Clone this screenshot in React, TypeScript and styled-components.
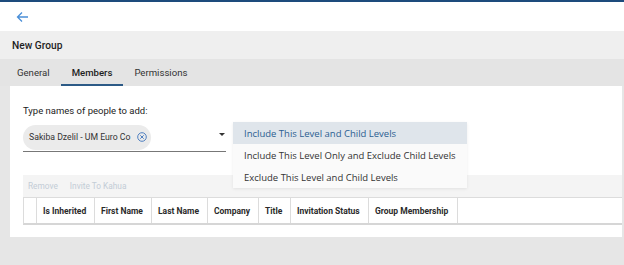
import styled, { createGlobalStyle } from "styled-components";

const Global = createGlobalStyle`
  html, body {
    margin: 0;
    padding: 0;
    background: #e6e6e6;
    font-family: Roboto, "Liberation Sans", Arial, sans-serif;
    color: #222;
  }
  * { box-sizing: border-box; }
`

const Page = styled.div`
  width: 624px;
  height: 265px;
  overflow: hidden;
  background: #e6e6e6;
  border-top: 2px solid #1d4b7c;
`

const TopBar = styled.div`
  height: 29px;
  background: #fff;
  display: flex;
  align-items: center;
  padding-left: 16px;
  color: #4a8fd8;
`

const TitleBar = styled.div`
  height: 28px;
  background: #efefef;
  display: flex;
  align-items: center;
  padding-left: 12px;
  font-size: 10.2px;
  font-weight: 500;
  color: #1e1e1e;
`

const Tabs = styled.div`
  height: 27px;
  background: #e4e4e4;
  display: flex;
  align-items: stretch;
  padding-left: 6px;
`

const Tab = styled.div<{ $active?: boolean }>`
  padding: 2px 11px 0;
  display: flex;
  align-items: center;
  font-size: 9.6px;
  color: ${p => (p.$active ? "#1e1e1e" : "#333")};
  font-weight: ${p => (p.$active ? 500 : 400)};
  border-bottom: 2px solid ${p => (p.$active ? "#2c5a86" : "transparent")};
`

const Panel = styled.div`
  margin-left: 10px;
  width: 612px;
  height: 151px;
  background: #fff;
  padding: 19px 0 0 13px;
  position: relative;
`

const Label = styled.div`
  font-size: 9.5px;
  color: #222;
  height: 15px;
`

const Field = styled.div`
  width: 203px;
  height: 29px;
  margin-top: 3px;
  border-bottom: 1px solid #777;
  display: flex;
  align-items: center;
  justify-content: space-between;
`

const Chip = styled.div`
  height: 25px;
  width: 128px;
  border-radius: 13px;
  background: #ebebeb;
  display: flex;
  align-items: center;
  gap: 7px;
  padding: 0 0 0 6px;
  font-size: 8.7px;
  color: #333;
  white-space: nowrap;
`

const Caret = styled.div`
  width: 0;
  height: 0;
  border-left: 3px solid transparent;
  border-right: 3px solid transparent;
  border-top: 3px solid #333;
  margin-right: 1px;
  margin-bottom: 6px;
`

const Menu = styled.div`
  position: absolute;
  left: 223px;
  top: 36px;
  width: 234px;
  background: #fafafa;
  box-shadow: 0 1px 3px rgba(0, 0, 0, 0.08);
  z-index: 5;
  font-family: "Open Sans", "Liberation Sans", sans-serif;
`

const MenuItem = styled.div<{ $active?: boolean }>`
  height: 22px;
  display: flex;
  align-items: center;
  padding-left: 11px;
  font-size: 9.5px;
  white-space: nowrap;
  background: ${p => (p.$active ? "#dfe5eb" : "transparent")};
  color: ${p => (p.$active ? "#2b5e91" : "#333")};
`

const Toolbar = styled.div`
  margin-top: 23px;
  height: 22px;
  background: #f4f4f4;
  display: flex;
  align-items: center;
  gap: 12px;
  padding-left: 5px;
  font-size: 8.3px;
  color: #c3ccd6;
`

const HeaderRow = styled.div`
  height: 28px;
  display: flex;
  border-top: 1px solid #dcdcdc;
  border-bottom: 2px solid #d6d6d6;
  border-left: 1px solid #dcdcdc;
`

const HeadCell = styled.div<{ $w?: number }>`
  width: ${p => (p.$w ? p.$w + "px" : "auto")};
  flex: ${p => (p.$w ? "none" : 1)};
  border-right: 1px solid #dcdcdc;
  display: flex;
  align-items: center;
  padding-left: 6px;
  font-size: 8.5px;
  font-weight: 700;
  color: #2a2a2a;
  white-space: nowrap;
  &:last-child { border-right: none; }
`

const cols: [string, number][] = [
  ["", 13],
  ["Is Inherited", 58],
  ["First Name", 57],
  ["Last Name", 56],
  ["Company", 51],
  ["Title", 32],
  ["Invitation Status", 78],
  ["Group Membership", 89],
]

export default function App() {
  return (
    <>
      <Global />
      <Page>
        <TopBar>
          <svg width="13" height="12" viewBox="0 0 13 12" fill="none" stroke="currentColor" strokeWidth="1.3">
            <path d="M12 6H1.5M6 1.5L1.5 6L6 10.5" />
          </svg>
        </TopBar>
        <TitleBar>New Group</TitleBar>
        <Tabs>
          <Tab>General</Tab>
          <Tab $active>Members</Tab>
          <Tab>Permissions</Tab>
        </Tabs>
        <Panel>
          <Label>Type names of people to add:</Label>
          <Field>
            <Chip>
              Sakiba Dzelil - UM Euro Co
              <svg width="10" height="10" viewBox="0 0 10 10" fill="none" stroke="#4f7fc0" strokeWidth="1">
                <circle cx="5" cy="5" r="4.3" />
                <path d="M3.3 3.3L6.7 6.7M6.7 3.3L3.3 6.7" />
              </svg>
            </Chip>
            <Caret />
          </Field>
          <Menu>
            <MenuItem $active>Include This Level and Child Levels</MenuItem>
            <MenuItem>Include This Level Only and Exclude Child Levels</MenuItem>
            <MenuItem>Exclude This Level and Child Levels</MenuItem>
          </Menu>
          <Toolbar>
            <span>Remove</span>
            <span>Invite To Kahua</span>
          </Toolbar>
          <HeaderRow>
            {cols.map(([name, w], i) => (
              <HeadCell key={i} $w={w}>{name}</HeadCell>
            ))}
            <HeadCell />
          </HeaderRow>
        </Panel>
      </Page>
    </>
  )
}
